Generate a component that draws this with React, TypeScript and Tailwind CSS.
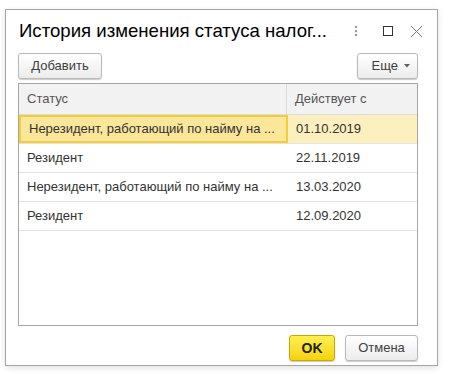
import React from "react";

const rows = [
  { status: "Нерезидент, работающий по найму на ...", date: "01.10.2019", active: true },
  { status: "Резидент", date: "22.11.2019" },
  { status: "Нерезидент, работающий по найму на ...", date: "13.03.2020" },
  { status: "Резидент", date: "12.09.2020" },
];

const Btn = ({ children, className = "" }: { children: React.ReactNode; className?: string }) => (
  <button
    className={`h-[26px] rounded-[3px] border border-[#b9b9b9] bg-gradient-to-b from-white to-[#ececec] text-[13px] text-[#404040] shadow-[0_1px_1px_rgba(0,0,0,0.2)] ${className}`}
  >
    {children}
  </button>
);

export default function App() {
  return (
    <div className="w-[472px] h-[374px] bg-white pt-[9px] pl-[5px] font-['Liberation_Sans',Arial,sans-serif]">
      <div className="w-[433px] h-[357px] border border-[#a6a6a6] bg-white shadow-[0_2px_6px_rgba(0,0,0,0.12)] flex flex-col">
        {/* title */}
        <div className="flex items-center h-[42px] pl-[13px] pr-[14px]">
          <div className="text-[18.6px] text-black flex-1 leading-none">История изменения статуса налог...</div>
          <div className="flex items-center">
            <svg width="4" height="12" viewBox="0 0 4 12" className="mr-[25px]">
              <circle cx="2" cy="2" r="1.2" fill="#9a9a9a" />
              <circle cx="2" cy="6" r="1.2" fill="#9a9a9a" />
              <circle cx="2" cy="10" r="1.2" fill="#9a9a9a" />
            </svg>
            <svg width="10" height="10" viewBox="0 0 10 10" className="mr-[17px]">
              <rect x="0.5" y="0.5" width="9" height="9" fill="none" stroke="#333" strokeWidth="1" />
            </svg>
            <svg width="13" height="13" viewBox="0 0 13 13">
              <path d="M1 1 L12 12 M12 1 L1 12" stroke="#7a7a7a" strokeWidth="1" />
            </svg>
          </div>
        </div>

        {/* command bar */}
        <div className="flex justify-between pl-[12px] pr-[19px] mt-[1px]">
          <Btn className="w-[84px]">Добавить</Btn>
          <Btn className="w-[61px] flex items-center justify-end pr-[7px] gap-[6px]">
            <span>Еще</span>
            <svg width="6" height="4" viewBox="0 0 6 4">
              <path d="M0 0 H6 L3 3.5 Z" fill="#606060" />
            </svg>
          </Btn>
        </div>

        {/* table */}
        <div className="ml-[12px] mr-[19px] mt-[4px] h-[243px] border border-[#a6a6a6] text-[13px] text-[#333]">
          <div className="flex h-[31px] bg-[#f2f2f2] border-b border-[#dcdcdc] text-[#555]">
            <div className="w-[268px] border-r border-[#dcdcdc] pl-[8px] flex items-center">Статус</div>
            <div className="flex-1 pl-[8px] flex items-center">Действует с</div>
          </div>
          {rows.map((r, i) => (
            <div
              key={i}
              className={`flex h-[29px] border-b border-[#e3e3e3] ${r.active ? "bg-[#fcf0be]" : ""}`}
            >
              <div
                className={`w-[269px] flex items-center pl-[8px] ${
                  r.active ? "bg-[#fbe69a] border-2 border-[#f2cf3a] pl-[6px]" : ""
                }`}
              >
                {r.status}
              </div>
              <div className="flex-1 flex items-center pl-[8px]">{r.date}</div>
            </div>
          ))}
        </div>

        {/* footer */}
        <div className="flex justify-end gap-[10px] pr-[19px] mt-[9px]">
          <button className="w-[46px] h-[26px] rounded-[3px] border border-[#c9a700] bg-gradient-to-b from-[#fff04d] to-[#f5d300] text-[14px] font-bold text-[#222] shadow-[0_1px_1px_rgba(0,0,0,0.2)]">
            OK
          </button>
          <Btn className="w-[73px]">Отмена</Btn>
        </div>
      </div>
    </div>
  );
}
